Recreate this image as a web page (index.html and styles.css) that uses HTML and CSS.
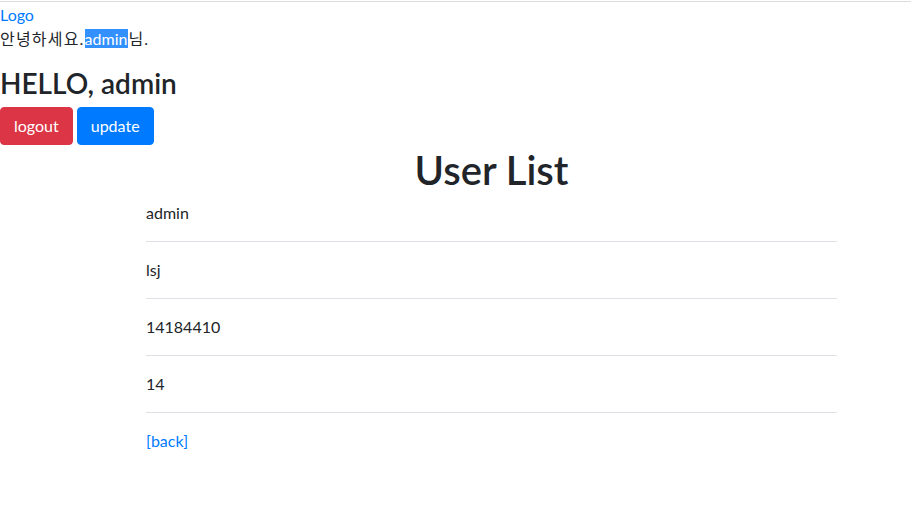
FILE: index.html
```html
<!DOCTYPE html>
<html lang="ko">
<head>
<meta charset="utf-8">
<title>User List</title>
<link rel="stylesheet" href="styles.css">
</head>
<body>
<header class="topbar">
  <a class="logo" href="#">Logo</a>
  <p class="greeting"><span class="ko">안녕하세요.</span><span class="sel">admin</span><span class="ko">님.</span></p>
</header>
<section class="hello">
  <h3 class="hello-title">HELLO, admin</h3>
  <div class="actions">
    <button class="btn btn-danger" type="button">logout</button>
    <button class="btn btn-primary" type="button">update</button>
  </div>
</section>
<main class="content">
  <h1 class="page-title">User List</h1>
  <ul class="user-list">
    <li class="user-row">admin</li>
    <li class="user-row">lsj</li>
    <li class="user-row">14184410</li>
    <li class="user-row">14</li>
  </ul>
  <a class="back" href="#">[back]</a>
</main>
</body>
</html>
```
FILE: styles.css
```css
html, body {
  margin: 0;
  padding: 0;
  background: #fff;
}
body {
  font-family: "Lato", "Noto Sans CJK KR", sans-serif;
  font-size: 16px;
  line-height: 1.5;
  color: #212529;
}
a {
  color: #007bff;
  text-decoration: none;
}
.topbar {
  margin-top: 1px;
  border-top: 1px solid #dcdcdc;
  padding-top: 1px;
}
.logo {
  display: block;
}
.greeting {
  margin: 0 0 16px;
}
.ko {
  letter-spacing: 1.2px;
}
.sel {
  background: #3390ff;
  color: #fff;
  padding-right: 1px;
}
.hello-title {
  margin: 0 0 6px;
  font-size: 28px;
  font-weight: 600;
  line-height: 1.2;
}
.actions {
  display: flex;
  gap: 4px;
}
.btn {
  font-family: inherit;
  font-size: 16px;
  line-height: 24px;
  padding: 6px 13px;
  border: 1px solid transparent;
  border-radius: 4px;
  color: #fff;
  cursor: pointer;
}
.btn-danger {
  background: #dc3545;
  border-color: #dc3545;
}
.btn-primary {
  background: #007bff;
  border-color: #007bff;
}
.content {
  margin-left: 146px;
  width: 691px;
  display: flex;
  flex-direction: column;
}
.page-title {
  margin: 10px 0 0;
  font-size: 40px;
  font-weight: 600;
  line-height: 30px;
  text-align: center;
}
.user-list {
  list-style: none;
  margin: 0;
  padding: 0;
}
.user-row {
  padding: 16px 0;
  border-bottom: 1px solid #dee2e6;
}
.back {
  align-self: flex-start;
  margin-top: 16px;
}
```
